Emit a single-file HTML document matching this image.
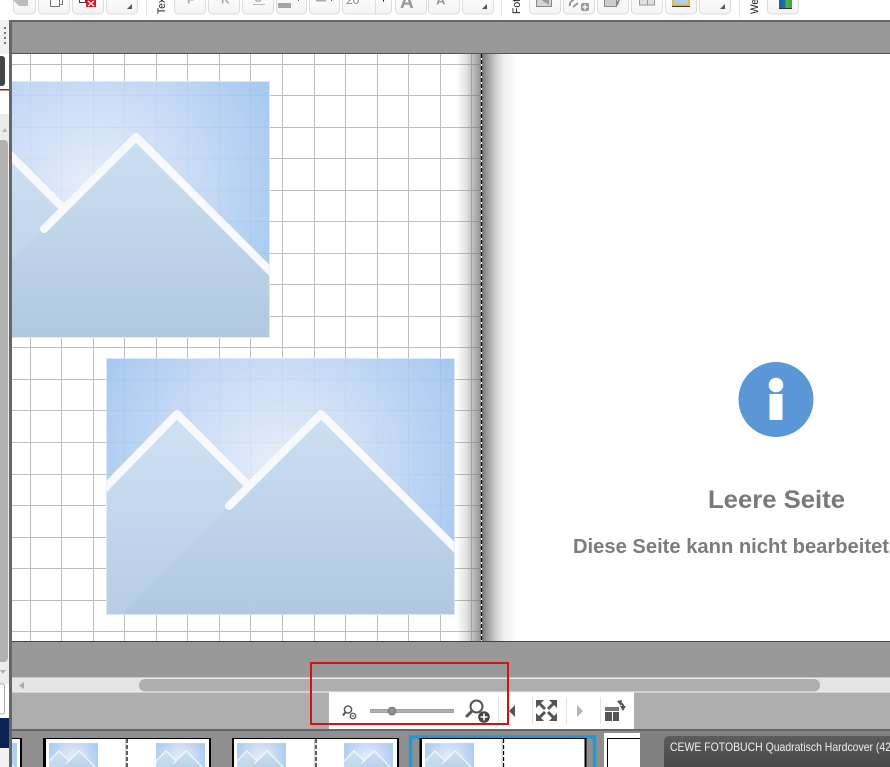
<!DOCTYPE html>
<html lang="de"><head><meta charset="utf-8"><title>CEWE Fotobuch</title>
<style>html,body{margin:0;padding:0;width:890px;height:767px;overflow:hidden;background:#999}svg{display:block}text{font-family:"Liberation Sans",sans-serif}</style></head>
<body>
<svg width="890" height="767" viewBox="0 0 890 767" xmlns="http://www.w3.org/2000/svg">
<defs>
<radialGradient id="sky" gradientUnits="userSpaceOnUse" cx="172" cy="108" r="205">
<stop offset="0" stop-color="#e5ecf9"/><stop offset=".5" stop-color="#c2d7f5"/><stop offset="1" stop-color="#9bc2ed"/></radialGradient>
<linearGradient id="mtB" gradientUnits="userSpaceOnUse" x1="0" y1="50" x2="0" y2="257"><stop offset="0" stop-color="#d0e2f5"/><stop offset="1" stop-color="#b6cde5"/></linearGradient>
<linearGradient id="mtF" gradientUnits="userSpaceOnUse" x1="0" y1="55" x2="0" y2="257"><stop offset="0" stop-color="#cce0f3"/><stop offset="1" stop-color="#b0c8e0"/></linearGradient>
<linearGradient id="shL" x1="0" x2="1" y1="0" y2="0"><stop offset="0" stop-color="#777" stop-opacity="0"/><stop offset=".4" stop-color="#777" stop-opacity=".2"/><stop offset="1" stop-color="#777" stop-opacity=".8"/></linearGradient>
<linearGradient id="shR" x1="0" x2="1" y1="0" y2="0"><stop offset="0" stop-color="#777"/><stop offset=".25" stop-color="#999" stop-opacity=".75"/><stop offset=".6" stop-color="#bbb" stop-opacity=".25"/><stop offset="1" stop-color="#ccc" stop-opacity="0"/></linearGradient>
<linearGradient id="btn" x1="0" x2="0" y1="0" y2="1"><stop offset="0" stop-color="#fff"/><stop offset="1" stop-color="#f4f4f4"/></linearGradient>
<linearGradient id="tip" x1="0" x2="0" y1="0" y2="1"><stop offset="0" stop-color="#5c5c5c"/><stop offset="1" stop-color="#424242"/></linearGradient>
<linearGradient id="grd" x1="0" x2="1" y1="0" y2="0"><stop offset="0" stop-color="#1c5fae"/><stop offset=".45" stop-color="#1c6fae"/><stop offset=".55" stop-color="#4fb53a"/><stop offset="1" stop-color="#3f9f4a"/></linearGradient>
<symbol id="pic" viewBox="0 0 349 257" width="349" height="257" overflow="hidden">
<rect width="349" height="257" fill="url(#sky)" opacity=".9"/>
<polygon points="0,129 71,56 215,200 215,257 0,257" fill="url(#mtB)"/>
<polygon points="123,148 215,56 349,190 349,257 14,257" fill="url(#mtF)"/>
<path d="M-6,135 L71,56 L141,126" fill="none" stroke="#f8f9fc" stroke-width="8" stroke-linejoin="round"/>
<path d="M123,148 L215,56 L356,197" fill="none" stroke="#f8f9fc" stroke-width="8" stroke-linecap="round" stroke-linejoin="round"/>
<rect x=".5" y=".5" width="348" height="256" fill="none" stroke="#e6effa" stroke-opacity=".8"/>
</symbol>
<symbol id="mini" viewBox="0 0 49 40" width="49" height="40"><use href="#pic" width="49" height="36.1"/></symbol>
<clipPath id="cv"><rect x="12" y="54" width="878" height="587"/></clipPath>
<clipPath id="tb"><rect x="0" y="0" width="890" height="15"/></clipPath>
<clipPath id="bt"><rect x="12" y="731" width="628" height="36"/></clipPath>
<clipPath id="tt"><rect x="664" y="735" width="226" height="32"/></clipPath>
</defs>

<!-- base -->
<rect width="890" height="767" fill="#999"/>
<rect x="0" y="0" width="890" height="20" fill="#fff"/>
<rect x="9" y="20" width="881" height="2" fill="#666"/>
<rect x="12" y="22" width="878" height="31" fill="#989898"/>
<rect x="12" y="53" width="878" height="1" fill="#555"/>

<!-- toolbar -->
<g clip-path="url(#tb)" fill="url(#btn)" stroke="#dcdcdc">
<rect x="-30" y="-9" width="32.5" height="23" rx="4"/>
<rect x="13.5" y="-9" width="22" height="23" rx="4"/>
<rect x="38.5" y="-9" width="31" height="23" rx="4"/>
<rect x="72.5" y="-9" width="31" height="23" rx="4"/>
<rect x="106.5" y="-9" width="31" height="23" rx="4"/>
<rect x="174.5" y="-9" width="31" height="23" rx="4"/>
<rect x="208.5" y="-9" width="31" height="23" rx="4"/>
<rect x="242.5" y="-9" width="31" height="23" rx="4"/>
<rect x="276.5" y="-9" width="30" height="23" rx="4"/>
<rect x="309.5" y="-9" width="30" height="23" rx="4"/>
<rect x="342.5" y="-9" width="49" height="23" rx="4"/>
<rect x="395.5" y="-9" width="31" height="23" rx="4"/>
<rect x="428.5" y="-9" width="31" height="23" rx="4"/>
<rect x="462.5" y="-9" width="31" height="23" rx="4"/>
<rect x="529.5" y="-9" width="31" height="23" rx="4"/>
<rect x="563.5" y="-9" width="31" height="23" rx="4"/>
<rect x="597.5" y="-9" width="31" height="23" rx="4"/>
<rect x="631.5" y="-9" width="31" height="23" rx="4"/>
<rect x="665.5" y="-9" width="31" height="23" rx="4"/>
<rect x="699.5" y="-9" width="31" height="23" rx="4"/>
<rect x="767.5" y="-9" width="31" height="23" rx="4"/>
</g>
<g fill="#e4e4e4"><rect x="146" y="0" width="1" height="17"/><rect x="501" y="0" width="1" height="17"/><rect x="739" y="0" width="1" height="17"/></g>
<!-- toolbar icons -->
<polygon points="13,0 19,6 28,6 28,0" fill="#bdbdbd"/>
<path d="M50.5,-2V6.5H59.5V-2M59.5,4.5H62.5V-2" fill="#fff" stroke="#777"/>
<rect x="79.5" y="-3" width="6" height="5.5" fill="#fff" stroke="#444"/>
<rect x="86" y="0" width="10" height="7" fill="#d3182f"/>
<path d="M88,1L94,6M94,1L88,6" stroke="#fff" stroke-width="1.3"/>
<g fill="#555"><polygon points="132,4 132,9 127,9"/><polygon points="487,4 487,9 482,9"/><polygon points="725,4 725,9 720,9"/></g>
<text transform="translate(165,14) rotate(-90)" font-size="11" fill="#222" textLength="16" lengthAdjust="spacingAndGlyphs">Tex</text>
<text transform="translate(520,14) rotate(-90)" font-size="11" fill="#222" textLength="15" lengthAdjust="spacingAndGlyphs">Fot</text>
<text transform="translate(758,14) rotate(-90)" font-size="11" fill="#222" textLength="15" lengthAdjust="spacingAndGlyphs">We</text>
<g font-weight="bold" fill="#aaa" clip-path="url(#tb)">
<text x="187" y="3.5" font-size="12">F</text><text x="221" y="3.5" font-size="12">K</text><text x="254" y="2" font-size="12">U</text>
<text x="400" y="8" font-size="19" fill="#999">A</text><text x="436" y="4.5" font-size="13" fill="#999">A</text>
</g>
<rect x="253" y="4" width="12" height="1" fill="#bbb"/>
<rect x="278" y="3" width="13" height="5" fill="#a5a5a5"/>
<rect x="298" y="0" width="1" height="1" fill="#555"/><rect x="383" y="0" width="1" height="1.5" fill="#111"/>
<rect x="316" y="0" width="10" height="1.5" fill="#aaa"/><rect x="331" y="0" width="1" height="1" fill="#555"/>
<rect x="375" y="0" width="1" height="14" fill="#ddd"/>
<text x="346" y="4" font-size="12" fill="#888">20</text>
<path d="M536.5,-2V6.5H551.5V-2" fill="#d4d4d4" stroke="#888"/><polygon points="540,-1 549,-1 549,5" fill="#999"/>
<path d="M570,6C569,3 572,0 574,0M578,3L573,7" fill="none" stroke="#999" stroke-width="2"/>
<rect x="581" y="3" width="8" height="8" rx="2" fill="#999"/><path d="M585,4.5V9.5M582.5,7H587.5" stroke="#fff" stroke-width="1.5"/>
<rect x="604.5" y="-3" width="12" height="9.5" fill="#ccc" stroke="#888"/><path d="M619,0L617,5" stroke="#888" stroke-width="2"/>
<rect x="639.5" y="-3" width="15" height="8" fill="#e0e0e0" stroke="#999"/><rect x="647" y="0" width="1" height="5" fill="#999"/>
<rect x="673" y="-3" width="16" height="8" fill="#a9d2f2" stroke="#e7b851" stroke-width="2"/><rect x="672" y="6" width="18" height="1" fill="#333"/>
<rect x="779" y="0" width="13" height="8" fill="url(#grd)"/><rect x="779" y="8" width="13" height="1" fill="#333"/>

<!-- left panel -->
<rect x="0" y="0" width="9" height="767" fill="#fff"/>
<rect x="0" y="20" width="9" height="34" fill="#f0f0f0"/>
<path d="M5,27V45" stroke="#222" stroke-width="1.2" stroke-dasharray="2 3"/>
<rect x="-6" y="56" width="11" height="30" rx="3" fill="#444"/>
<rect x="0" y="89" width="9" height="1.5" fill="#9e1b2c"/>
<rect x="0" y="114" width="9" height="570" fill="#ececec"/>
<polygon points="2,132 5,128 7,132" fill="#b5b5b5"/>
<rect x="-4" y="140" width="12" height="522" rx="4" fill="#b2b2b2"/>
<polygon points="0,670 6,670 3,674" fill="#b0b0b0"/>
<rect x="-5" y="684" width="9.5" height="30" rx="2" fill="#fff" stroke="#aaa"/>
<rect x="0" y="718" width="9" height="30" fill="#0b2255"/>
<rect x="0" y="748" width="9" height="19" fill="#f2f2f2"/>
<rect x="9" y="20" width="3" height="747" fill="#666"/>

<!-- canvas -->
<g clip-path="url(#cv)">
<rect x="12" y="54" width="878" height="587" fill="#fff"/>
<g stroke="#bdbdbd" shape-rendering="crispEdges">
<path d="M30.5,54V641M61.5,54V641M93.5,54V641M124.5,54V641M156.5,54V641M187.5,54V641M219.5,54V641M250.5,54V641M282.5,54V641M314.5,54V641M345.5,54V641M377.5,54V641M408.5,54V641M440.5,54V641M471.5,54V641"/>
<path d="M12,64.5H482M12,95.5H482M12,127.5H482M12,158.5H482M12,190.5H482M12,221.5H482M12,253.5H482M12,284.5H482M12,316.5H482M12,347.5H482M12,379.5H482M12,410.5H482M12,442.5H482M12,474.5H482M12,505.5H482M12,537.5H482M12,568.5H482M12,600.5H482M12,631.5H482"/>
</g>
<use href="#pic" x="-79" y="81" width="349" height="257"/>
<use href="#pic" x="106" y="358" width="349" height="257"/>
<rect x="456" y="54" width="25" height="587" fill="url(#shL)"/>
<rect x="482" y="54" width="36" height="587" fill="url(#shR)"/>
<rect x="481" y="54" width="1" height="587" fill="#fff"/>
<path d="M481.5,54V641" stroke="#000" stroke-width="1.3" stroke-dasharray="4 2"/>
<circle cx="776" cy="399.5" r="37.5" fill="#5b96d6"/>
<circle cx="776" cy="385" r="7.3" fill="#fff"/>
<rect x="769.5" y="394" width="13" height="26" fill="#fff"/>
<text x="708" y="508" font-size="25" font-weight="bold" fill="#797979" textLength="137" lengthAdjust="spacingAndGlyphs">Leere Seite</text>
<text x="573" y="553" font-size="20" font-weight="bold" fill="#7c7c7c" textLength="316" lengthAdjust="spacingAndGlyphs">Diese Seite kann nicht bearbeitet</text>
</g>
<rect x="12" y="641" width="878" height="1" fill="#444"/>

<!-- lower gray + scrollbar -->
<rect x="12" y="642" width="878" height="36" fill="#999"/>
<rect x="12" y="678" width="878" height="14" fill="#e4e4e4"/>
<rect x="12" y="677.5" width="878" height="1" fill="#f2f2f2"/>
<rect x="12" y="691.5" width="878" height="1" fill="#f2f2f2"/>
<rect x="139" y="679" width="681" height="12.5" rx="6" fill="#aeaeae"/>
<polygon points="24,682 24,689 19,685.5" fill="#a8a8a8"/>
<rect x="12" y="692.5" width="878" height="36.5" fill="#aeaeae"/>

<!-- zoom bar -->
<rect x="329" y="692.5" width="305" height="36.5" fill="#fff"/>
<g fill="none" stroke="#555">
<circle cx="348" cy="709.5" r="3.6" stroke-width="1.4"/><path d="M345.5,712L343,715.5" stroke-width="2"/>
<circle cx="353" cy="716" r="2.8" stroke-width="1.2"/>
<circle cx="476.5" cy="706.5" r="6" stroke-width="2"/><path d="M472,711L467,716" stroke-width="3" stroke-linecap="round"/>
</g>
<path d="M351.5,716H354.5" stroke="#555"/>
<circle cx="484" cy="717" r="5.8" fill="#444"/><path d="M484,713.5V720.5M480.5,717H487.5" stroke="#fff" stroke-width="1.6"/>
<rect x="370.5" y="709.5" width="83" height="3" fill="#b0b0b0" stroke="#8a8a8a" stroke-width=".7"/>
<circle cx="392" cy="711" r="4" fill="#8d8d8d" stroke="#6f6f6f" stroke-width=".7"/>
<g fill="#e2e2e2"><rect x="498" y="697" width="1" height="27"/><rect x="532" y="697" width="1" height="27"/><rect x="566" y="697" width="1" height="27"/><rect x="600" y="697" width="1" height="27"/></g>
<polygon points="515,705 515,717 509,711" fill="#555"/>
<g fill="#555"><polygon points="536,700 544,700 536,708"/><polygon points="557,700 549,700 557,708"/><polygon points="536,721 544,721 536,713"/><polygon points="557,721 549,721 557,713"/></g>
<g stroke="#555" stroke-width="3"><path d="M538,702L545,709M555,702L548,709M538,719L545,712M555,719L548,712"/></g>
<polygon points="577,705 577,717 583,711" fill="#b5b5b5"/>
<g fill="#555"><rect x="605" y="707" width="14" height="4" fill="#777"/><rect x="605" y="712" width="7" height="9"/><rect x="613" y="712" width="6" height="9"/></g>
<path d="M620,703C623,704 624,706 623,708" fill="none" stroke="#555" stroke-width="1.8"/><polygon points="617,701 622,700 621,706" fill="#555"/><polygon points="620,706 626,706 623,711" fill="#555"/>

<!-- red highlight -->
<rect x="311" y="663" width="197" height="61" fill="none" stroke="#d01414" stroke-width="2"/>

<!-- thumbs -->
<rect x="12" y="729" width="878" height="2" fill="#666"/>
<rect x="12" y="731" width="628" height="36" fill="#8f8f8f"/>
<rect x="640" y="731" width="250" height="36" fill="#808080"/>
<g clip-path="url(#bt)">
<rect x="0" y="739" width="20" height="28" fill="#fff"/><rect x="0" y="738" width="22" height="1" fill="#000"/><rect x="20" y="738" width="2" height="29" fill="#000"/>
<use href="#mini" x="-32" y="743"/>
<rect x="43.5" y="738.5" width="167" height="40" fill="#fff" stroke="#000"/><rect x="44" y="738" width="2" height="29" fill="#000"/><rect x="209" y="738" width="2" height="29" fill="#000"/>
<path d="M127,739V767" stroke="#000" stroke-width="1.3" stroke-dasharray="4 2"/><rect x="125" y="739" width="1.5" height="28" fill="#ccc"/>
<use href="#mini" x="49" y="743"/><use href="#mini" x="156" y="743"/>
<rect x="232.5" y="738.5" width="166" height="40" fill="#fff" stroke="#000"/><rect x="232" y="738" width="2" height="29" fill="#000"/><rect x="397" y="738" width="2" height="29" fill="#000"/>
<path d="M316,739V767" stroke="#000" stroke-width="1.3" stroke-dasharray="4 2"/><rect x="314" y="739" width="1.5" height="28" fill="#ccc"/>
<use href="#mini" x="237" y="743"/><use href="#mini" x="344" y="743"/>
<path d="M410.5,767V737H594.5V767" fill="none" stroke="#1b9ad6" stroke-width="3.4"/>
<rect x="420" y="738.5" width="166" height="40" fill="#fff" stroke="#000"/><rect x="420" y="738" width="2" height="29" fill="#000"/><rect x="584.5" y="738" width="2" height="29" fill="#000"/>
<path d="M503.5,739V767" stroke="#000" stroke-width="1.3" stroke-dasharray="4 2"/><rect x="501.5" y="739" width="1.5" height="28" fill="#ccc"/>
<use href="#mini" x="425" y="743"/>
<rect x="604" y="733" width="36" height="34" fill="#fff"/><path d="M607.5,767V738.5H640" fill="none" stroke="#000"/>
</g>
<!-- tooltip -->
<rect x="664" y="736" width="240" height="40" rx="5" fill="url(#tip)"/>
<g clip-path="url(#tt)"><text x="670" y="751" font-size="12" fill="#f0f0f0" textLength="221" lengthAdjust="spacingAndGlyphs">CEWE FOTOBUCH Quadratisch Hardcover (42</text></g>
</svg>
</body></html>
